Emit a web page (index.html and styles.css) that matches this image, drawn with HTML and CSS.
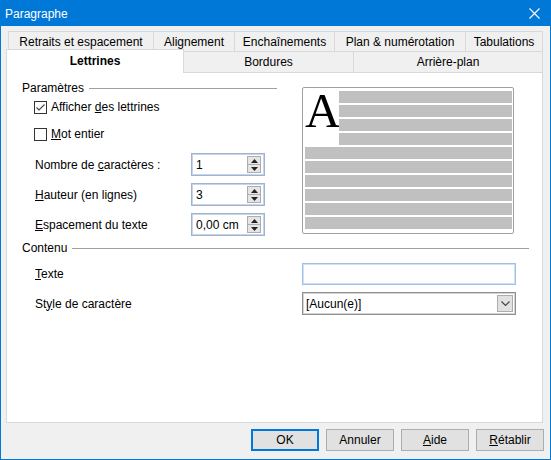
FILE: index.html
```html
<!DOCTYPE html>
<html lang="fr">
<head>
<meta charset="utf-8">
<title>Paragraphe</title>
<link rel="stylesheet" href="styles.css">
</head>
<body>
<div class="window">
  <div class="titlebar">
    <span class="title">Paragraphe</span>
    <svg class="close" width="11" height="11" viewBox="0 0 11 11"><path d="M0.5 0.5 L10.5 10.5 M10.5 0.5 L0.5 10.5" stroke="#fff" stroke-width="1.1" fill="none"/></svg>
  </div>
  <div class="body">
    <div class="tabrow row1">
      <div class="tab w-retraits">Retraits et espacement</div>
      <div class="tab w-align">Alignement</div>
      <div class="tab w-ench">Enchaînements</div>
      <div class="tab w-plan">Plan &amp; numérotation</div>
      <div class="tab w-tab">Tabulations</div>
    </div>
    <div class="tabrow row2">
      <div class="tab sel w-lett">Lettrines</div>
      <div class="tab w-bord">Bordures</div>
      <div class="tab w-arr">Arrière-plan</div>
    </div>
    <div class="panel">
      <div class="top">
        <div class="params">
          <div class="group-title"><span>Paramètres</span><span class="rule"></span></div>
          <div class="check c1"><span class="box"><svg width="11" height="11" viewBox="0 0 11 11"><path d="M1.5 5.5 L4 8 L9.5 2.5" stroke="#444" stroke-width="1.1" fill="none"/></svg></span><span>Afficher <u>d</u>es lettrines</span></div>
          <div class="check c2"><span class="box"></span><span><u>M</u>ot entier</span></div>
          <div class="field f1"><span class="lbl">Nombre de <u>c</u>aractères :</span>
            <div class="spin"><span class="val">1</span><span class="spinbtn"><span class="half"><svg width="7" height="4" viewBox="0 0 7 4"><path d="M0 4 L3.5 0 L7 4 Z" fill="#222"/></svg></span><span class="half"><svg width="7" height="4" viewBox="0 0 7 4"><path d="M0 0 L3.5 4 L7 0 Z" fill="#222"/></svg></span></span></div>
          </div>
          <div class="field f2"><span class="lbl"><u>H</u>auteur (en lignes)</span>
            <div class="spin"><span class="val">3</span><span class="spinbtn"><span class="half"><svg width="7" height="4" viewBox="0 0 7 4"><path d="M0 4 L3.5 0 L7 4 Z" fill="#222"/></svg></span><span class="half"><svg width="7" height="4" viewBox="0 0 7 4"><path d="M0 0 L3.5 4 L7 0 Z" fill="#222"/></svg></span></span></div>
          </div>
          <div class="field f2"><span class="lbl"><u>E</u>spacement du texte</span>
            <div class="spin"><span class="val">0,00 cm</span><span class="spinbtn"><span class="half"><svg width="7" height="4" viewBox="0 0 7 4"><path d="M0 4 L3.5 0 L7 4 Z" fill="#222"/></svg></span><span class="half"><svg width="7" height="4" viewBox="0 0 7 4"><path d="M0 0 L3.5 4 L7 0 Z" fill="#222"/></svg></span></span></div>
          </div>
        </div>
        <div class="preview">
          <div class="capblock">
            <div class="cap">A</div>
            <div class="bars">
              <div class="bar"></div><div class="bar"></div><div class="bar"></div><div class="bar"></div>
            </div>
          </div>
          <div class="bar"></div><div class="bar"></div><div class="bar"></div>
          <div class="bar"></div><div class="bar"></div><div class="bar"></div>
        </div>
      </div>
      <div class="group-title contenu"><span>Contenu</span><span class="rule"></span></div>
      <div class="row r1"><span class="lbl2"><u>T</u>exte</span><div class="textbox"></div></div>
      <div class="row r2"><span class="lbl2">St<u>y</u>le de caractère</span>
        <div class="select"><span class="sval">[Aucun(e)]</span><span class="dd"><svg width="9" height="5" viewBox="0 0 9 5"><path d="M0.5 0.5 L4.5 4.5 L8.5 0.5" stroke="#444" stroke-width="1.1" fill="none"/></svg></span></div>
      </div>
    </div>
    <div class="buttons">
      <div class="btn default">OK</div>
      <div class="btn">Annuler</div>
      <div class="btn"><u>A</u>ide</div>
      <div class="btn"><u>R</u>établir</div>
    </div>
  </div>
</div>
</body>
</html>
```

FILE: styles.css
```css
html, body {
  margin: 0;
  padding: 0;
  background: #ffffff;
}
body {
  font-family: "Liberation Sans", Arial, sans-serif;
  font-size: 12px;
  color: #000;
}
u { text-decoration: underline; text-underline-offset: 1px; }

.window {
  width: 551px;
  height: 460px;
  box-sizing: border-box;
  border: 1px solid #0078d7;
  background: #f0f0f0;
  display: flex;
  flex-direction: column;
}
.titlebar {
  height: 25px;
  background: #0078d7;
  color: #fff;
  display: flex;
  align-items: center;
  justify-content: space-between;
  padding: 0 10px 0 4px;
  flex: none;
}
.title { font-size: 12px; line-height: 16px; }
.close { display: block; }

.body {
  padding: 5px 7px 0 5px;
  display: flex;
  flex-direction: column;
}

.tabrow { display: flex; }
.row1 { margin-left: 2px; height: 21px; }
.row2 { margin-top: -1px; height: 21px; align-items: flex-end; }
.tab {
  box-sizing: border-box;
  border: 1px solid #d9d9d9;
  background: #f0f0f0;
  display: flex;
  align-items: center;
  justify-content: center;
  white-space: nowrap;
  margin-left: -1px;
  height: 21px;
  line-height: 14px;
}
.tab:first-child { margin-left: 0; }
.row2 .tab { border-bottom: none; height: 21px; }
.row2 .tab.sel {
  position: relative;
  z-index: 2;
  background: #fff;
  font-weight: bold;
  height: 24px;
  margin-bottom: -1px;
  padding-bottom: 1px;
}
.w-retraits { width: 146px; }
.w-align { width: 82px; }
.w-ench { width: 101px; }
.w-plan { width: 132px; }
.w-tab { width: 78px; }
.w-lett { width: 178px; }
.w-bord { width: 171px; }
.w-arr { width: 190px; }

.panel {
  box-sizing: border-box;
  width: 537px;
  height: 351px;
  background: #fff;
  border: 1px solid #d9d9d9;
  padding: 7px 13px 0 15px;
}
.top { display: flex; align-items: flex-start; }
.params { width: 255px; }

.group-title {
  display: flex;
  align-items: center;
  height: 16px;
  line-height: 16px;
}
.group-title .rule {
  flex: 1;
  height: 1px;
  background: #a0a0a0;
  margin-left: 5px;
}
.contenu { margin-top: 4px; }

.check {
  display: flex;
  align-items: center;
  height: 22px;
  margin-left: 12px;
}
.c2 { margin-top: 5px; }
.box {
  box-sizing: border-box;
  width: 13px;
  height: 13px;
  border: 1px solid #333;
  background: #fff;
  margin-right: 4px;
  display: flex;
  align-items: center;
  justify-content: center;
}
.box svg { display: block; }

.field {
  display: flex;
  align-items: center;
  margin-left: 13px;
  height: 23px;
}
.f1 { margin-top: 8px; }
.f2 { margin-top: 7px; }
.lbl { width: 156px; flex: none; }

.spin {
  box-sizing: border-box;
  width: 74px;
  height: 23px;
  border: 1px solid #9fb3d1;
  box-shadow: inset 0 0 0 1px #c8d5e8;
  background: #fff;
  display: flex;
  align-items: center;
  padding: 0 3px 0 4px;
}
.val { flex: 1; }
.spinbtn {
  box-sizing: border-box;
  width: 14px;
  height: 17px;
  border: 1px solid #adadad;
  background: #e5e5e5;
  display: flex;
  flex-direction: column;
}
.half {
  flex: 1;
  display: flex;
  align-items: center;
  justify-content: center;
}
.half + .half { border-top: 1px solid #adadad; }
.half svg { display: block; }

.preview {
  box-sizing: border-box;
  width: 212px;
  height: 147px;
  margin: 7px 0 0 25px;
  border: 1px solid #a0a0a0;
  border-radius: 2px;
  padding: 3px 1px 0 2px;
  background: #fff;
}
.capblock { display: flex; }
.cap {
  width: 34px;
  flex: none;
  font-family: "Liberation Serif", "Times New Roman", serif;
  font-size: 49px;
  line-height: 40px;
  height: 54px;
}
.bars { flex: 1; }
.bar {
  height: 12px;
  background: #c0c0c0;
  margin-bottom: 2px;
}

.row {
  display: flex;
  align-items: center;
  margin-left: 13px;
}
.r1 { margin-top: 7px; height: 22px; }
.r2 { margin-top: 7px; height: 23px; }
.lbl2 { width: 267px; flex: none; }
.textbox {
  box-sizing: border-box;
  width: 214px;
  height: 22px;
  border: 1px solid #9fc1e8;
  box-shadow: inset 0 0 0 1px #cfe0f3;
  background: #fff;
}
.select {
  box-sizing: border-box;
  width: 214px;
  height: 23px;
  border: 1px solid #8f8f8f;
  box-shadow: inset 0 0 0 1px #d4d4d4;
  background: #fff;
  display: flex;
  align-items: center;
  padding: 0 2px 0 3px;
}
.sval { flex: 1; }
.dd {
  box-sizing: border-box;
  width: 16px;
  height: 17px;
  border: 1px solid #adadad;
  background: #e1e1e1;
  display: flex;
  align-items: center;
  justify-content: center;
}
.dd svg { display: block; }

.buttons {
  display: flex;
  justify-content: flex-end;
  gap: 7px;
  margin-top: 6px;
  margin-right: -1px;
}
.btn {
  box-sizing: border-box;
  width: 68px;
  height: 22px;
  border: 1px solid #adadad;
  background: #e1e1e1;
  display: flex;
  align-items: center;
  justify-content: center;
}
.btn.default { border: 2px solid #0078d7; }
```
